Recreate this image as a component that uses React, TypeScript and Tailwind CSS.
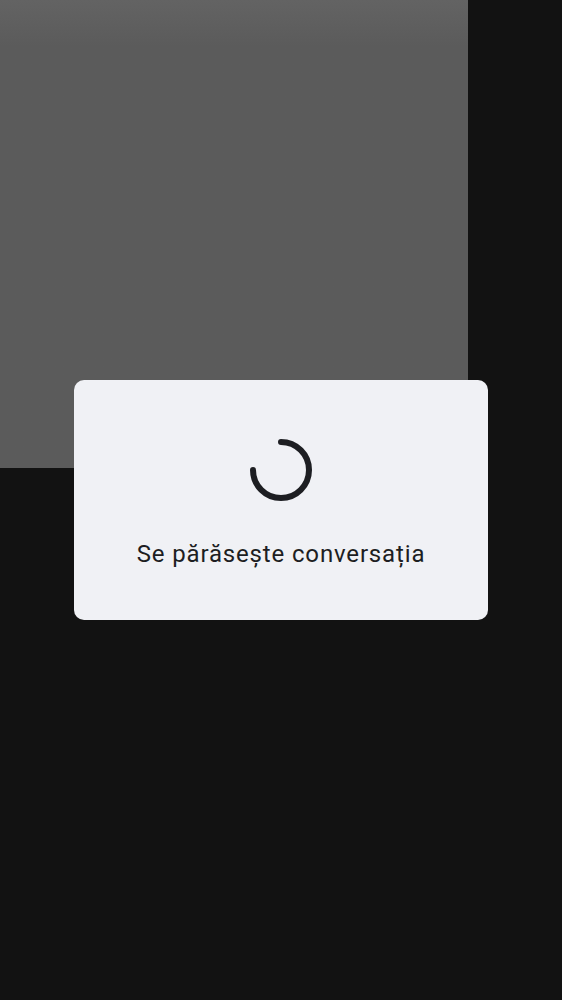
import React from "react";

function Spinner() {
  return (
    <svg width="62" height="62" viewBox="0 0 62 62" fill="none">
      <path
        d="M31 3 A28 28 0 1 1 3 31"
        stroke="#1d1e22"
        strokeWidth="6"
        strokeLinecap="round"
      />
    </svg>
  );
}

export default function App() {
  return (
    <div className="relative h-[1000px] w-full overflow-hidden bg-[#121212] font-['Roboto',sans-serif]">
      {/* video tile behind the modal */}
      <div className="h-[468px] w-[468px] bg-gradient-to-b from-[#636363] via-[#5b5b5b] via-[10%] to-[#5b5b5b]" />

      {/* leaving dialog */}
      <div className="fixed inset-0 flex items-center justify-center">
        <div className="flex h-[240px] w-[414px] flex-col items-center rounded-[10px] bg-[#f0f1f5] pt-[59px]">
          <Spinner />
          <p className="mt-[37px] text-[24px] leading-[32px] tracking-[0.85px] text-[#1d1e22]">Se părăsește conversația</p>
        </div>
      </div>
    </div>
  );
}
